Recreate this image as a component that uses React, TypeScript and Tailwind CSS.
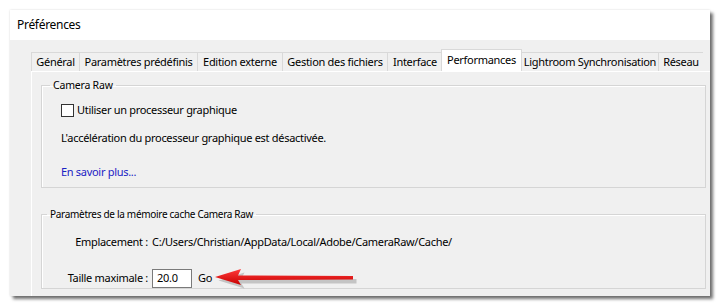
const tabs = [
  { label: 'Général', w: 'w-[48px]' },
  { label: 'Paramètres prédéfinis', w: 'w-[118px]' },
  { label: 'Edition externe', w: 'w-[85px]' },
  { label: 'Gestion des fichiers', w: 'w-[105px]' },
  { label: 'Interface', w: 'w-[55px]' },
  { label: 'Performances', w: 'w-[81px]', active: true },
  { label: 'Lightroom Synchronisation', w: 'w-[137px]' },
  { label: 'Réseau', w: 'w-[45px]' },
];

const RedArrow = () => (
  <svg width="142" height="22" viewBox="0 0 142 22" className="shrink-0">
    <defs>
      <linearGradient id="shaft" x1="0" y1="0" x2="0" y2="1">
        <stop offset="0" stopColor="#ff3b3b" />
        <stop offset="1" stopColor="#c80000" />
      </linearGradient>
    </defs>
    {/* shadow */}
    <path d="M2 12 L28 4 L25 10 L140 10.5 L140 15 L25 15 L28 20 Z" fill="#000" opacity="0.18" transform="translate(1.5,1.5)" />
    <path d="M0 10 L26 2 L23 8.5 L138 9 L138 12.5 L23 13 L26 18 Z" fill="url(#shaft)" />
  </svg>
);

export default function App() {
  return (
    <div className="w-[721px] h-[307px] bg-white pt-[10px] pl-[10px] font-['Segoe_UI','Noto_Sans',sans-serif] text-[11px] tracking-[-0.3px] text-black overflow-hidden whitespace-nowrap">
      <div className="w-[700px] h-[286px] flex flex-col overflow-hidden bg-[#f0f0f0] shadow-[0_0_2px_rgba(0,0,0,0.15),3px_3px_3px_rgba(0,0,0,0.55)]">
        <div className="h-[30px] shrink-0 bg-white flex items-center pl-[7px] text-[12px]">Préférences</div>
        <div className="flex-1 pt-[9px] pl-[21px] flex flex-col">
          <div className="flex items-end h-[22px]">
            {tabs.map((t) =>
              t.active ? (
                <div key={t.label} className={`${t.w} h-[22px] flex justify-center pt-[2px] bg-white border border-b-0 border-[#d9d9d9] -mx-px relative`}>
                  {t.label}
                </div>
              ) : (
                <div key={t.label} className={`${t.w} h-[19px] flex items-center justify-center border border-r-0 border-b-0 border-[#d9d9d9]`}>
                  {t.label}
                </div>
              )
            )}
          </div>
          <div className="flex-1 border-t border-l border-white pl-[9px] pr-[4px] pt-[6px]">
            <fieldset className="border border-[#d5d5d5] shadow-[inset_1px_1px_0_#fff] pl-[19px] pb-[5px]">
              <legend className="ml-[-11px] px-[3px] text-[10.5px] tracking-[-0.2px] leading-[15px]">Camera Raw</legend>
              <div className="flex flex-col pt-[7px]">
                <label className="h-[20px] flex items-center gap-[3px]">
                  <span className="w-[13px] h-[13px] border border-[#333] bg-white" />
                  <span>Utiliser un processeur graphique</span>
                </label>
                <div className="h-[20px] mt-[8px] flex items-center">L'accélération du processeur graphique est désactivée.</div>
                <div className="h-[20px] mt-[14px] flex items-center text-[#1a22c4]">En savoir plus...</div>
              </div>
            </fieldset>
            <fieldset className="mt-[19px] border border-[#d5d5d5] shadow-[inset_1px_1px_0_#fff]">
              <legend className="ml-[5px] px-[3px] text-[10px] leading-[14px]">Paramètres de la mémoire cache Camera Raw</legend>
              <div className="grid grid-cols-[106px_1fr] gap-x-[4px] pt-[11px]">
                <div className="h-[20px] flex items-center justify-end">Emplacement :</div>
                <div className="h-[20px] flex items-center">C:/Users/Christian/AppData/Local/Adobe/CameraRaw/Cache/</div>
                <div className="h-[20px] mt-[16px] flex items-center justify-end">Taille maximale :</div>
                <div className="h-[20px] mt-[16px] flex items-center">
                  <div className="w-[40px] h-[19px] border border-[#7a7a7a] bg-white pl-[4px] flex items-center">20.0</div>
                  <span className="ml-[6px]">Go</span>
                  <span className="ml-[3px]"><RedArrow /></span>
                </div>
              </div>
            </fieldset>
          </div>
        </div>
      </div>
    </div>
  );
}
